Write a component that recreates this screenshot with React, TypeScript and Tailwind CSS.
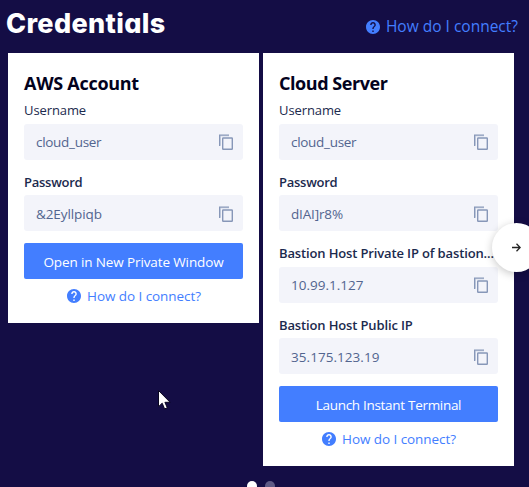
function HelpIcon({ className }: { className: string }) {
  return (
    <svg viewBox="2 2 20 20" className={className} fill="currentColor">
      <path d="M12 2C6.48 2 2 6.48 2 12s4.48 10 10 10 10-4.48 10-10S17.52 2 12 2zm1 17h-2v-2h2v2zm2.07-7.75l-.9.92C13.45 12.9 13 13.5 13 15h-2v-.5c0-1.1.45-2.1 1.17-2.83l1.24-1.26c.37-.36.59-.86.59-1.41 0-1.1-.9-2-2-2s-2 .9-2 2H8c0-2.21 1.79-4 4-4s4 1.79 4 4c0 .88-.36 1.68-.93 2.25z" />
    </svg>
  );
}

function CopyIcon() {
  return (
    <svg width="14" height="16" viewBox="0 0 14 16" fill="none" stroke="#8797b8" className="shrink-0">
      <path d="M1.5 11.5V2H10" stroke="#d5dcea" strokeWidth="1" />
      <path d="M.65 12V1.2H10" strokeWidth="1.3" />
      <rect x="3.7" y="4" width="9.6" height="11.2" rx=".5" strokeWidth="1.4" />
    </svg>
  );
}

type Entry = { label: string; value: string; labelClass: string; valueClass: string };

function Field({ label, value, labelClass, valueClass }: Entry) {
  return (
    <div>
      <div className="flex h-[25px] items-center pb-[2px]">
        <span className={`whitespace-nowrap text-[13px] leading-5 text-[#1b2a4e] ${labelClass}`}>{label}</span>
      </div>
      <div className="flex h-9 items-center justify-between rounded-[3px] bg-[#f3f4fa] pl-3 pr-[10px] pt-px">
        <span className={`whitespace-nowrap text-[13.5px] leading-5 text-[#52658f] ${valueClass}`}>{value}</span>
        <CopyIcon />
      </div>
    </div>
  );
}

type CardProps = { title: string; titleClass: string; entries: Entry[]; action: string; actionClass: string };

function Card({ title, titleClass, entries, action, actionClass }: CardProps) {
  return (
    <section className="w-[251px] bg-white px-4 pb-[10px] pt-4">
      <h2 className={`flex h-[29.8px] items-center whitespace-nowrap text-[18px] font-bold text-[#03021d] ${titleClass}`}>{title}</h2>
      <div className="flex flex-col gap-[10.5px]">
        {entries.map((entry) => (
          <Field key={entry.label} {...entry} />
        ))}
      </div>
      <button className="mt-3 flex h-9 w-full items-center justify-center rounded-[2px] bg-[#437eff] pt-[2px] text-[13.5px] text-white">
        <span className={`whitespace-nowrap ${actionClass}`}>{action}</span>
      </button>
      <a className="flex h-[34px] items-center justify-center gap-[6px] pl-px text-[13.5px] text-[#437eff]">
        <HelpIcon className="size-[14px]" />
        <span className="whitespace-nowrap tracking-[-0.07px]">How do I connect?</span>
      </a>
    </section>
  );
}

const username: Entry = {
  label: "Username",
  value: "cloud_user",
  labelClass: "font-medium tracking-[-0.1px]",
  valueClass: "tracking-[-0.3px]",
};

export default function App() {
  return (
    <main className="relative h-[487px] w-[529px] overflow-hidden bg-[#140d45] font-['Open_Sans','Noto_Sans',sans-serif]">
      <header className="flex h-[53px] items-center justify-between pl-[6px] pr-[11px]">
        <h1 className="pb-[6px] font-['Inter',sans-serif] text-[27px] font-extrabold leading-8 tracking-[0.35px] text-white [font-feature-settings:'cv11']">Credentials</h1>
        <a className="flex items-center gap-[6px] pt-px text-[15.5px] text-[#437eff]">
          <HelpIcon className="size-[14px]" />
          <span className="whitespace-nowrap">How do I connect?</span>
        </a>
      </header>
      <div className="flex items-start gap-1 pl-2">
        <Card
          title="AWS Account"
          titleClass="tracking-[-0.28px]"
          entries={[
            username,
            { label: "Password", value: "&2Eyllpiqb", labelClass: "font-semibold tracking-[-0.25px]", valueClass: "tracking-[-0.1px]" },
          ]}
          action="Open in New Private Window"
          actionClass="tracking-[-0.12px]"
        />
        <Card
          title="Cloud Server"
          titleClass="tracking-[-0.45px]"
          entries={[
            username,
            { label: "Password", value: "dIAI]r8%", labelClass: "font-semibold tracking-[-0.25px]", valueClass: "tracking-[-0.15px]" },
            { label: "Bastion Host Private IP of bastion...", value: "10.99.1.127", labelClass: "font-semibold tracking-[-0.14px]", valueClass: "" },
            { label: "Bastion Host Public IP", value: "35.175.123.19", labelClass: "font-semibold tracking-[-0.14px]", valueClass: "tracking-[0.05px]" },
          ]}
          action="Launch Instant Terminal"
          actionClass="tracking-[-0.3px]"
        />
      </div>
      <button className="absolute left-[492px] top-[223px] flex size-[49px] items-center justify-center rounded-full bg-white shadow-[0_2px_8px_rgba(0,0,0,0.22)]">
        <svg width="9" height="9" viewBox="0 0 9 9" fill="none" stroke="#222" strokeWidth="1.3">
          <path d="M0 4.5h8M4.5.8l3.7 3.7-3.7 3.7" />
        </svg>
      </button>
      <div className="absolute left-[247px] top-[481px] flex gap-2">
        <span className="size-[10px] rounded-full bg-white" />
        <span className="size-[10px] rounded-full bg-[#5f5a85]" />
      </div>
      <svg className="absolute left-[158px] top-[390px]" width="13" height="20" viewBox="0 0 13 20">
        <path d="M.5.5v16.2l3.7-3.5 2.4 5.7 2.7-1.1-2.4-5.5h5.2z" fill="white" stroke="#090620" />
      </svg>
    </main>
  );
}
